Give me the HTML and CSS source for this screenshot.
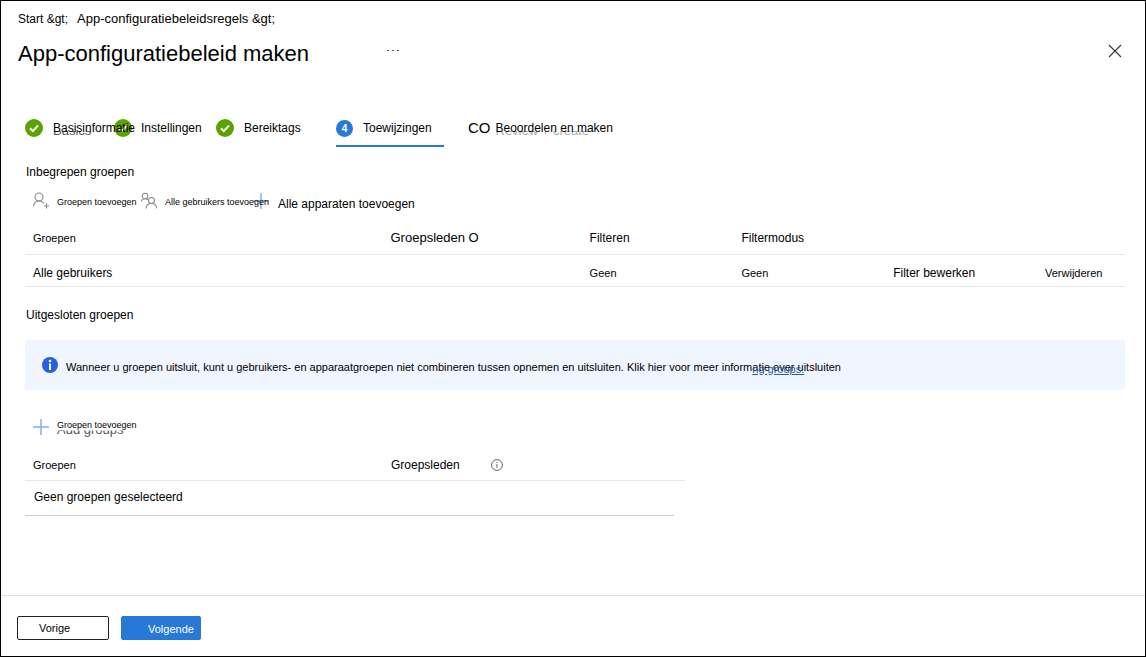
FILE: index.html
```html
<!DOCTYPE html>
<html lang="nl">
<head>
<meta charset="utf-8">
<meta name="viewport" content="width=device-width, initial-scale=1">
<title>App-configuratiebeleid maken</title>
<link rel="stylesheet" href="styles.css">
</head>
<body>
<div class="page">
  <header class="header">
    <nav class="crumbs" aria-label="Kruimelpad">
      <a href="#">Start &amp;gt;</a>
      <a href="#" class="crumb-large">App-configuratiebeleidsregels &amp;gt;</a>
    </nav>
    <div class="title-row">
      <h1>App-configuratiebeleid maken</h1>
      <button class="icon-button more" type="button" aria-label="Meer">
        <svg width="12" height="4" viewBox="0 0 12 4" fill="#555"><rect x="0" y="1" width="2" height="1"/><rect x="5" y="1" width="2" height="1"/><rect x="10" y="1" width="2" height="1"/></svg>
      </button>
      <button class="icon-button close" type="button" aria-label="Sluiten">
        <svg width="14" height="14" viewBox="0 0 14 14" fill="none" stroke="#333" stroke-width="1.1"><path d="M1 1l12 12M13 1L1 13"/></svg>
      </button>
    </div>
  </header>

  <main class="content">
    <nav class="steps" aria-label="Stappen">
      <a href="#" class="step">
        <svg class="step-icon" viewBox="0 0 18 18"><circle cx="9" cy="9" r="9" fill="#5ba300"/><path d="M5 9.3l2.8 2.8L13 6.5" fill="none" stroke="#fff" stroke-width="2"/></svg>
        <span class="step-label">Basisinformatie<span class="under low" aria-hidden="true">Basics</span></span>
      </a>
      <a href="#" class="step">
        <svg class="step-icon" viewBox="0 0 18 18"><circle cx="9" cy="9" r="9" fill="#5ba300"/><path d="M5 9.3l2.8 2.8L13 6.5" fill="none" stroke="#fff" stroke-width="2"/></svg>
        <span class="step-label">Instellingen</span>
      </a>
      <a href="#" class="step third">
        <svg class="step-icon" viewBox="0 0 18 18"><circle cx="9" cy="9" r="9" fill="#5ba300"/><path d="M5 9.3l2.8 2.8L13 6.5" fill="none" stroke="#fff" stroke-width="2"/></svg>
        <span class="step-label">Bereiktags</span>
      </a>
      <a href="#" class="step current" aria-current="step">
        <span class="step-number">4</span>
        <span class="step-label">Toewijzingen</span>
      </a>
      <a href="#" class="step last">
        <span class="step-mark">CO</span>
        <span class="step-label">Beoordelen en maken<span class="under low pale" aria-hidden="true">Review + create</span></span>
      </a>
    </nav>

    <h2>Inbegrepen groepen</h2>
    <div class="commands">
      <button type="button" class="command">
        <svg width="16" height="18" viewBox="0 0 16 18" fill="none" stroke="#8a8a8a" stroke-width="1.1"><circle cx="6" cy="5" r="4"/><path d="M0.5 14.5C.8 11 3 9 6 9c2.200 0 3.800.9 4.700 2.500M13.500 11.500v5M11 14h5"/></svg>
        <span class="command-label">Groepen toevoegen</span>
      </button>
      <button type="button" class="command">
        <svg width="16" height="18" viewBox="0 0 16 18" fill="none" stroke="#8a8a8a" stroke-width="1.1"><circle cx="4" cy="4" r="2.8"/><circle cx="10.5" cy="8.5" r="3"/><path d="M.5 9.500C.6 7.800 2 6.800 4 6.800c1.200 0 2.100.3 2.800 1M5 16.500c.3-3 2.500-5 5.500-5s5 2 5.300 5"/></svg>
        <span class="command-label">Alle gebruikers toevoegen</span>
      </button>
      <button type="button" class="command wide">
        <svg width="17" height="16" viewBox="0 0 17 16" fill="none" stroke="#7fb0ec" stroke-width="1.5"><path d="M9 0v16M1 8h16"/></svg>
        <span class="wide-label">Alle apparaten toevoegen</span>
      </button>
    </div>

    <table class="included">
      <thead>
        <tr><th class="small">Groepen</th><th class="large">Groepsleden O</th><th>Filteren</th><th>Filtermodus</th><th></th><th></th></tr>
      </thead>
      <tbody>
        <tr><td>Alle gebruikers</td><td></td><td class="small">Geen</td><td class="small">Geen</td><td><a href="#">Filter bewerken</a></td><td class="small"><a href="#">Verwijderen</a></td></tr>
      </tbody>
    </table>

    <h2 class="excluded-title">Uitgesloten groepen</h2>
    <div class="notice">
      <svg width="16" height="16" viewBox="0 0 16 16"><circle cx="8" cy="8" r="8" fill="#2560e0"/><circle cx="8" cy="4" r="1.3" fill="#fff"/><rect x="7" y="6.5" width="2" height="6.5" fill="#fff"/></svg>
      <p>Wanneer u groepen uitsluit, kunt u gebruikers- en apparaatgroepen niet combineren tussen opnemen en uitsluiten. Klik hier voor meer inform<a href="#" class="notice-link">atie over uitsluiten<span class="under link" aria-hidden="true">ng groups.</span></a></p>
    </div>

    <div class="commands second">
      <button type="button" class="command">
        <svg width="16" height="16" viewBox="0 0 16 16" fill="none" stroke="#7fb0ec" stroke-width="1.5"><path d="M8 0v16M0 8h16"/></svg>
        <span class="command-label raised">Groepen toevoegen<span class="under add" aria-hidden="true">Add groups</span></span>
      </button>
    </div>

    <table class="excluded">
      <thead>
        <tr><th class="small">Groepen</th><th><span class="with-info">Groepsleden
          <svg width="12" height="12" viewBox="0 0 12 12" fill="none" stroke="#666"><circle cx="6" cy="6" r="5.4"/><path d="M6 5v4M6 3v1"/></svg></span></th></tr>
      </thead>
    </table>
    <p class="empty">Geen groepen geselecteerd</p>
  </main>

  <footer class="footer">
    <button type="button" class="button previous">Vorige</button>
    <button type="button" class="button next">Volgende</button>
  </footer>
</div>
</body>
</html>
```
FILE: styles.css
```css
* { box-sizing: border-box; }
body {
  margin: 0;
  background: #fff;
  color: #000;
  font: 12px/16px "Liberation Sans", Arial, sans-serif;
}
a { color: inherit; text-decoration: none; }
button { font: inherit; color: inherit; cursor: pointer; }
svg { flex: none; display: block; }
h1, h2, p { margin: 0; font-weight: 400; }

.page {
  min-height: 100vh;
  display: flex;
  flex-direction: column;
  border: 1px solid #000;
}
.header { padding: 10px 23px 0 17px; }
.crumbs { display: flex; gap: 9px; }
.crumb-large { font-size: 13px; }
.title-row { display: flex; align-items: center; margin-top: 13px; }
h1 { font-size: 22px; line-height: 28px; }
.icon-button { padding: 0 0 6px; border: 0; background: none; }
.more { margin-left: 78px; }
.close { margin-left: auto; }

.content { flex: 1; padding: 49px 20px 24px 24px; }
.steps { display: flex; }
.step {
  display: flex;
  align-items: center;
  gap: 10px;
  width: 89px;
  height: 30px;
  padding-bottom: 8px;
  white-space: nowrap;
}
.step:nth-child(2) { width: 102px; gap: 9px; }
.step.third { width: 120px; }
.step-icon { width: 18px; height: 18px; }
.step-label { position: relative; z-index: 1; }
.step.current { width: 108px; border-bottom: 2px solid #2878d8; padding-bottom: 6px; }
.step-number {
  width: 17px;
  height: 17px;
  border-radius: 50%;
  background: #2878d8;
  color: #fff;
  font-size: 10px;
  font-weight: 700;
  line-height: 17px;
  text-align: center;
}
.step.last { width: auto; margin-left: 24px; gap: 5px; }
.step-mark { font-size: 15px; }

/* Second text layer below a label, only its lower part showing */
.under { position: absolute; left: 0; z-index: -1; pointer-events: none; white-space: nowrap; }
.low { top: 3px; font-size: 13px; color: #555; clip-path: inset(8px 0 0 0); }
.pale { color: #aaa; }
.add { top: 5px; font-size: 13px; color: #555; clip-path: inset(9px 0 0 0); }
.link { top: 0; color: #2a5c95; text-decoration: underline; z-index: 0; }

h2 { font-size: 12px; line-height: 16px; margin: 17px 0 0 1px; }
.commands {
  display: grid;
  grid-template-columns: 108px 111px auto;
  align-items: center;
  height: 24px;
  margin: 9px 0 0 8px;
}
.command {
  display: flex;
  align-items: center;
  gap: 8px;
  padding: 0;
  border: 0;
  background: none;
  font-size: 9px;
  line-height: 16px;
  white-space: nowrap;
}
.command-label { position: relative; z-index: 1; padding-top: 2px; }
.command-label.raised { padding: 0 0 4px; }
.command.wide { gap: 9px; font-size: 12px; }
.wide-label { padding-top: 6px; }

table { border-collapse: collapse; table-layout: fixed; text-align: left; }
th, td { padding: 8px 0 7px 8px; height: 32px; font-weight: 400; border-bottom: 1px solid #e8e8e8; }
.small { font-size: 11px; }
.large { font-size: 13px; }
.included { width: 100%; margin-top: 9px; }
.included th:nth-child(1) { width: 32.5%; }
.included th:nth-child(2) { width: 18.1%; }
.included th:nth-child(3), .included th:nth-child(4), .included th:nth-child(5) { width: 13.8%; }
.included td { padding: 10px 0 5px 8px; }

.excluded-title { margin-top: 20px; }
.notice {
  display: flex;
  align-items: center;
  gap: 8px;
  min-height: 50px;
  margin-top: 17px;
  padding: 0 17px;
  border-radius: 2px;
  background: #f1f5ff;
}
.notice p { padding-top: 4px; font-size: 11px; }
.notice-link { position: relative; }
.second { margin-top: 25px; }
.excluded { width: 60%; margin-top: 10px; }
.excluded th:first-child { width: 358px; }
.with-info { display: flex; align-items: center; gap: 31px; }
.empty { width: 59%; padding: 8px 9px 10px; border-bottom: 1px solid #c8c8c8; }

.footer {
  display: flex;
  gap: 12px;
  padding: 20px 16px 16px;
  border-top: 1px solid #ddd;
}
.button { height: 24px; border: 1px solid #222; border-radius: 2px; font-size: 11px; line-height: 16px; text-align: left; }
.previous { width: 92px; padding: 0 21px; background: #fff; }
.next { width: 80px; padding: 2px 0 0 26px; border-color: #2878d8; background: #2878d8; color: #fff; }
```
